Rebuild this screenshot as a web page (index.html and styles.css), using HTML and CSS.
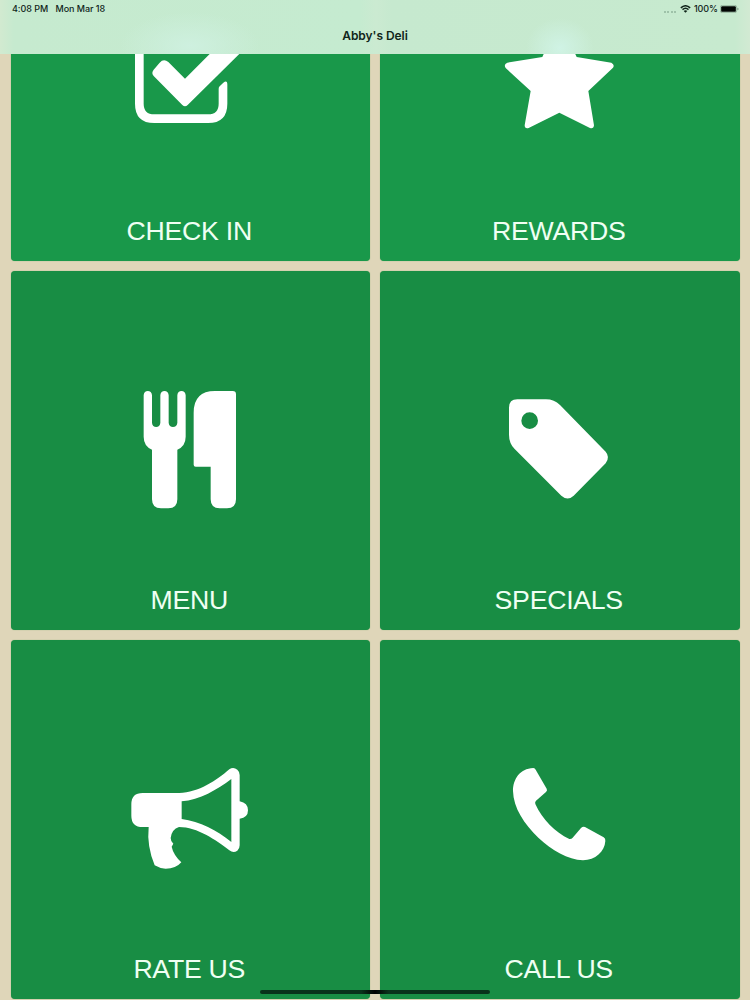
FILE: index.html
```html
<!DOCTYPE html>
<html lang="en">
<head>
<meta charset="utf-8">
<title>Abby's Deli</title>
<link rel="stylesheet" href="styles.css">
</head>
<body>
<div class="screen">
  <header class="header">
    <div class="status">
      <div class="status-left"><span class="time">4:08 PM</span><span class="date">Mon Mar 18</span></div>
      <div class="status-right">
        <span class="dots"><i></i><i></i><i></i><i></i></span>
        <svg class="wifi" viewBox="0 0 32 24"><path d="M2 8.5Q16-4 30 8.5M7 14q9-8 18 0" fill="none" stroke="#10251a" stroke-width="4.4"/><path d="M10.5 18q5.500-4.500 11 0L16 23.500z" fill="#10251a"/></svg>
        <span class="percent">100%</span>
        <svg class="battery" viewBox="0 0 57 24"><rect x="1" y="1" width="49" height="22" rx="6" fill="none" stroke="#7f9d88" stroke-width="2"/><rect x="3.500" y="3.500" width="44" height="17" rx="3.500" fill="#020604"/><path d="M52 8q4 1 4 4t-4 4z" fill="#7f9d88"/></svg>
      </div>
    </div>
    <h1 class="title">Abby's Deli</h1>
  </header>
  <main class="content">
    <div class="grid">
      <a class="tile bright">
        <svg class="icon" viewBox="0 0 480 480"><path d="M290 85H130Q75 85 75 140V305Q75 363 133 363H294Q352 363 352 305V248Q352 233 340 242L329 253Q326 256 326 260V305Q326 337 294 337H133Q101 337 101 305V140Q101 111 130 111H290z" fill="#fff"/><path d="M131 203L149 182Q161 169 175 180L225 230L345 110L405 139L233 309Q225 317 217 309L131 222Q123 213 131 203z" fill="#fff"/></svg>
        <span class="label">CHECK IN</span>
      </a>
      <a class="tile bright">
        <svg class="icon" viewBox="0 0 480 480"><path d="M82 182L187 165L230 70Q238 60 246 70L290 165L394 182Q405 188 399 197L325 267L342 370Q341 381 330 378L238 332L146 378Q134 381 134 370L152 267L77 198Q70 187 82 182z" fill="#fff"/></svg>
        <span class="label">REWARDS</span>
      </a>
      <a class="tile">
        <svg class="icon" viewBox="0 3 480 480"><path d="M101 76C101 59 126 59 126 76V158C126 175 151 175 151 158V76C151 59 176 59 176 76V158C176 175 202 175 202 158V76C202 59 227 59 227 76V200Q227 228 202 239V388Q202 415 175 415H153Q126 415 126 388V239Q101 228 101 200z" fill="#fff"/><path d="M315 63H368Q378 63 378 73V388Q378 415 351 415H329Q302 415 302 388V290H257Q251 290 251 284V128Q251 63 315 63z" fill="#fff"/></svg>
        <span class="label">MENU</span>
      </a>
      <a class="tile">
        <svg class="icon" viewBox="0 2 480 480"><path fill="#fff" fill-rule="evenodd" d="M112 87H198Q223 87 240 104L377 244Q391 260 377 279L281 376Q263 393 244 376L104 236Q87 219 87 193V112Q87 87 112 87zM149 126a25 25 0 1 0 0 50a25 25 0 1 0 0-50z"/></svg>
        <span class="label">SPECIALS</span>
      </a>
      <a class="tile">
        <svg class="icon" viewBox="0 0 480 480"><path fill="#fff" fill-rule="evenodd" d="M98 159H208C266 158 320 121 358 88Q370 80 382 89Q389 95 389 105V184Q414 189 414 211T389 236V316Q389 327 382 332Q370 340 358 331C318 300 262 261 207 261Q185 268 182 294Q182 304 190 311L185 320Q190 344 214 367Q198 386 167 386Q148 385 134 376Q110 318 116 261H98Q64 261 64 227V193Q64 159 98 159zM215 184V237C270 245 321 271 364 306V117C322 148 269 181 215 184z"/></svg>
        <span class="label">RATE US</span>
      </a>
      <a class="tile">
        <svg class="icon" viewBox="0 0 480 480"><path fill="#fff" d="M160 84Q165 85 167 89L200 146Q203 151 198 156L168 182Q164 186 166 192C187 238 225 277 268 297Q274 298 278 293L303 264Q309 258 315 261L371 292Q377 296 376 303C374 335 346 360 309 361C264 358 215 331 175 293C133 252 100 204 99 153C99 118 119 86 160 84z"/></svg>
        <span class="label">CALL US</span>
      </a>
    </div>
  </main>
  <div class="home-bar"></div>
</div>
</body>
</html>
```
FILE: styles.css
```css
* { box-sizing: border-box; }
body { margin: 0; font-family: "Liberation Sans", Arial, sans-serif; }
.screen {
  position: relative;
  width: 750px;
  height: 1000px;
  overflow: hidden;
  display: flex;
  flex-direction: column;
  background: #dfd6b9;
}
.header {
  flex: 0 0 54px;
  background:
    radial-gradient(ellipse 34px 30px at 560px 48px, #d0f3e5, transparent),
    radial-gradient(ellipse 70px 34px at 190px 46px, #cef0df, transparent),
    linear-gradient(90deg, #d2ead0 0, #c6eacf 14px, #c5ebd0 360px, #cbead1 376px, #c6e9cf 392px, #c7eacf 735px, #d2ead3 750px);
  color: #10251a;
  font-family: Inter, "Liberation Sans", sans-serif;
}
.status {
  height: 18px;
  padding: 0 11px 0 12px;
  display: flex;
  justify-content: space-between;
  align-items: center;
  font-size: 9px;
  font-weight: 500;
  line-height: 18px;
  white-space: nowrap;
}
.status-left { display: flex; gap: 8px; letter-spacing: -0.05px; }
.status-right { display: flex; align-items: center; }
.time { width: 35.500px; }
.dots { display: flex; gap: 1.500px; margin: 5px 4px 0 0; }
.dots i { width: 2px; height: 2px; border-radius: 1px; background: #91b49c; }
.wifi { width: 11px; height: 8px; margin-right: 3px; }
.percent { width: 23px; margin-right: 3px; letter-spacing: -0.15px; }
.battery { width: 19px; height: 8px; }
.title {
  margin: 9px 0 0;
  text-align: center;
  font-size: 12px;
  line-height: 18px;
  font-weight: 600;
  letter-spacing: -0.05px;
}
.content { flex: 1; overflow: hidden; }
.grid {
  display: grid;
  grid-template-columns: 359.500px 359.500px;
  grid-auto-rows: 359px;
  gap: 10px;
  padding: 0 10.500px;
  margin-top: -152.500px;
}
.tile {
  display: flex;
  flex-direction: column;
  align-items: center;
  padding-top: 100px;
  border-radius: 4px;
  background: #188d44;
  box-shadow: 0 0 1px #6fa66a;
}
.tile.bright { background: #19984a; }
.icon { width: 160px; height: 160px; flex: none; }
.label {
  margin-top: 53.500px;
  padding-right: 2px;
  font-size: 26.700px;
  line-height: 32px;
  letter-spacing: -0.28px;
  color: #effff3;
  white-space: nowrap;
}
.home-bar {
  position: absolute;
  left: 260px;
  top: 990px;
  width: 230px;
  height: 4px;
  border-radius: 2px;
  background: linear-gradient(90deg, #08331b 44%, #000 50%, #08331b 56%);
}
```
